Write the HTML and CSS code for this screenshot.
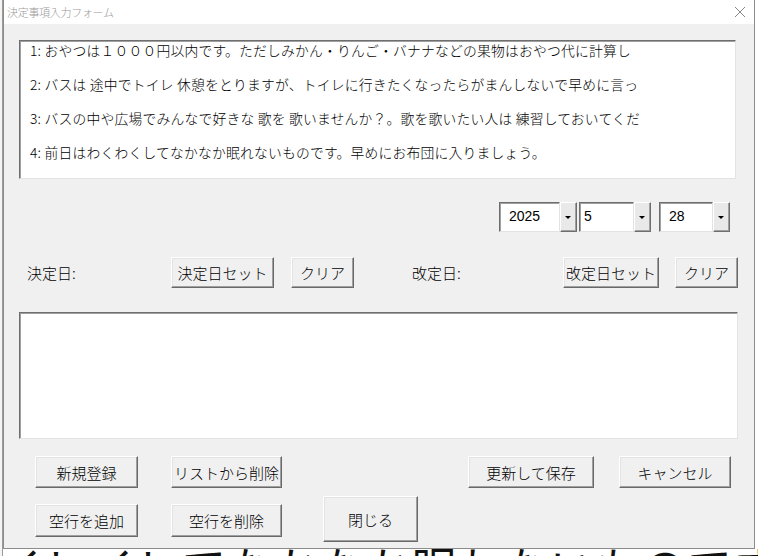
FILE: index.html
```html
<!DOCTYPE html>
<html lang="ja">
<head>
<meta charset="utf-8">
<title>決定事項入力フォーム</title>
<link rel="stylesheet" href="styles.css">
</head>
<body>
<div class="desktop">
  <div class="bg-strip"></div>
  <div class="bg-text">イレイレてなかなか眠れないものです。</div>

  <div class="window">
    <div class="titlebar">
      <span class="title">決定事項入力フォーム</span>
      <svg class="close" width="12" height="12" viewBox="0 0 12 12"><path d="M1 1 L11 11 M11 1 L1 11" stroke="#8a8a8a" stroke-width="1" fill="none"/></svg>
    </div>
    <div class="client">
      <div class="listbox">
        <div class="item">1: おやつは１０００円以内です。ただしみかん・りんご・バナナなどの果物はおやつ代に計算し</div>
        <div class="item">2: バスは 途中でトイレ 休憩をとりますが、トイレに行きたくなったらがまんしないで早めに言っ</div>
        <div class="item">3: バスの中や広場でみんなで好きな 歌を 歌いませんか？。歌を歌いたい人は 練習しておいてくだ</div>
        <div class="item">4: 前日はわくわくしてなかなか眠れないものです。早めにお布団に入りましょう。</div>
      </div>

      <div class="combo-row">
        <div class="combo c-year"><span class="val">2025</span><span class="drop"><i></i></span></div>
        <div class="combo c-month"><span class="val">5</span><span class="drop"><i></i></span></div>
        <div class="combo c-day"><span class="val">28</span><span class="drop"><i></i></span></div>
      </div>

      <div class="date-row">
        <span class="label l-kettei">決定日:</span>
        <button class="btn b-kset">決定日セット</button>
        <button class="btn b-clear1">クリア</button>
        <span class="label l-kaitei">改定日:</span>
        <button class="btn b-kaset">改定日セット</button>
        <button class="btn b-clear2">クリア</button>
      </div>

      <div class="textbox"></div>

      <div class="actions">
        <button class="btn a-new">新規登録</button>
        <button class="btn a-del">リストから削除</button>
        <button class="btn a-save">更新して保存</button>
        <button class="btn a-cancel">キャンセル</button>
        <button class="btn a-addrow">空行を追加</button>
        <button class="btn a-delrow">空行を削除</button>
        <button class="btn a-close">閉じる</button>
      </div>
    </div>
  </div>
</div>
</body>
</html>
```
FILE: styles.css
```css
html, body {
  margin: 0;
  padding: 0;
}
body {
  width: 758px;
  height: 556px;
  overflow: hidden;
  background: #ffffff;
  font-family: "Noto Sans CJK JP", "Noto Sans", sans-serif;
  font-weight: 300;
  color: #000;
}
.desktop {
  position: relative;
  width: 758px;
  height: 556px;
  overflow: hidden;
}
.bg-strip {
  position: absolute;
  left: 0;
  top: 0;
  width: 3px;
  height: 556px;
  background: #f4f4f4;
  border-right: 1px solid #9a9a9a;
  box-sizing: border-box;
}
.bg-text {
  position: absolute;
  left: -2px;
  top: 536px;
  font-size: 44px;
  line-height: 60px;
  white-space: nowrap;
  color: #111;
  font-weight: 400;
  letter-spacing: 2px;
}
.window {
  position: absolute;
  left: 3px;
  top: 0;
  width: 752px;
  height: 549px;
  box-sizing: border-box;
  border: 1px solid #8c8c8c;
  border-top: none;
  background: #f0f0f0;
  display: flex;
  flex-direction: column;
}
.titlebar {
  height: 24px;
  background: #ffffff;
  display: flex;
  align-items: center;
  justify-content: space-between;
  padding: 0 8px 0 3px;
}
.title {
  font-size: 11px;
  color: #9a9a9a;
  letter-spacing: -0.3px;
}
.close {
  display: block;
}
.client {
  flex: 1;
  display: flex;
  flex-direction: column;
  padding: 16px 0 0 15px;
}

/* sunken field */
.listbox, .textbox, .combo .val {
  background: #ffffff;
  border: 1px solid;
  border-color: #6e6e6e #e3e3e3 #e3e3e3 #6e6e6e;
  box-shadow: inset 1px 1px 0 #a0a0a0;
  box-sizing: border-box;
}
.listbox {
  width: 717px;
  height: 139px;
  padding: 0 0 0 10px;
}
.item {
  height: 34px;
  line-height: 18px;
  font-size: 13.8px;
  letter-spacing: 0.2px;
  white-space: nowrap;
  overflow: hidden;
}

.combo-row {
  display: flex;
  margin-top: 23px;
  padding-left: 480px;
  height: 30px;
}
.combo {
  display: flex;
  height: 30px;
}
.combo .val {
  flex: 1;
  font-size: 14px;
  line-height: 27px;
  padding-left: 9px;
  font-family: "Liberation Sans", Arial, sans-serif;
  font-weight: 400;
}
.c-year { width: 78px; }
.c-month { width: 72px; margin-left: 2px; }
.c-day { width: 71px; margin-left: 8px; }
.c-month .val { padding-left: 4px; }
.drop {
  width: 17px;
  height: 30px;
  box-sizing: border-box;
  background: #e9e9e9;
  border: 1px solid;
  border-color: #ffffff #6e6e6e #6e6e6e #ffffff;
  box-shadow: inset -1px -1px 0 #a0a0a0;
  display: flex;
  align-items: center;
  justify-content: center;
}
.drop i {
  width: 0;
  height: 0;
  border-left: 3px solid transparent;
  border-right: 3px solid transparent;
  border-top: 3px solid #000;
  margin-left: -1px;
}

.btn {
  box-sizing: border-box;
  background: #f0f0f0;
  border: 1px solid;
  border-color: #ffffff #696969 #696969 #ffffff;
  box-shadow: inset -1px -1px 0 #a0a0a0, inset 1px 1px 0 #e3e3e3;
  font-family: "Noto Sans CJK JP", sans-serif;
  font-weight: 300;
  font-size: 15px;
  color: #000;
  padding: 0;
  margin: 0;
  white-space: nowrap;
}

.date-row {
  display: flex;
  align-items: center;
  margin-top: 25px;
  height: 31px;
}
.label {
  font-size: 15px;
  flex: none;
}
.date-row .btn { flex: none; }
.l-kettei { margin-left: 8px; width: 144px; }
.b-kset { width: 103px; height: 31px; }
.b-clear1 { width: 63px; height: 31px; margin-left: 17px; }
.l-kaitei { margin-left: 58px; width: 151px; }
.b-kaset { width: 96px; height: 31px; }
.b-clear2 { width: 63px; height: 31px; margin-left: 16px; }

.textbox {
  width: 719px;
  height: 127px;
  margin-top: 24px;
}

.actions {
  display: grid;
  grid-template-columns: 103px 111px 95px 126px 112px;
  column-gap: 33px;
  grid-template-rows: 32px 33px;
  row-gap: 16px;
  margin-top: 17px;
  padding-left: 16px;
}
.actions .btn { width: 100%; height: 100%; }
.a-new { grid-column: 1; grid-row: 1; }
.a-del { grid-column: 2; grid-row: 1; }
.actions .a-save { grid-column: 4; grid-row: 1; margin-left: 25px; }
.actions .a-cancel { grid-column: 5; grid-row: 1; margin-left: 17px; }
.a-addrow { grid-column: 1; grid-row: 2; }
.a-delrow { grid-column: 2; grid-row: 2; }
.actions .a-close { grid-column: 3; grid-row: 2; height: 46px; margin-top: -8px; margin-left: 8px; }
```
